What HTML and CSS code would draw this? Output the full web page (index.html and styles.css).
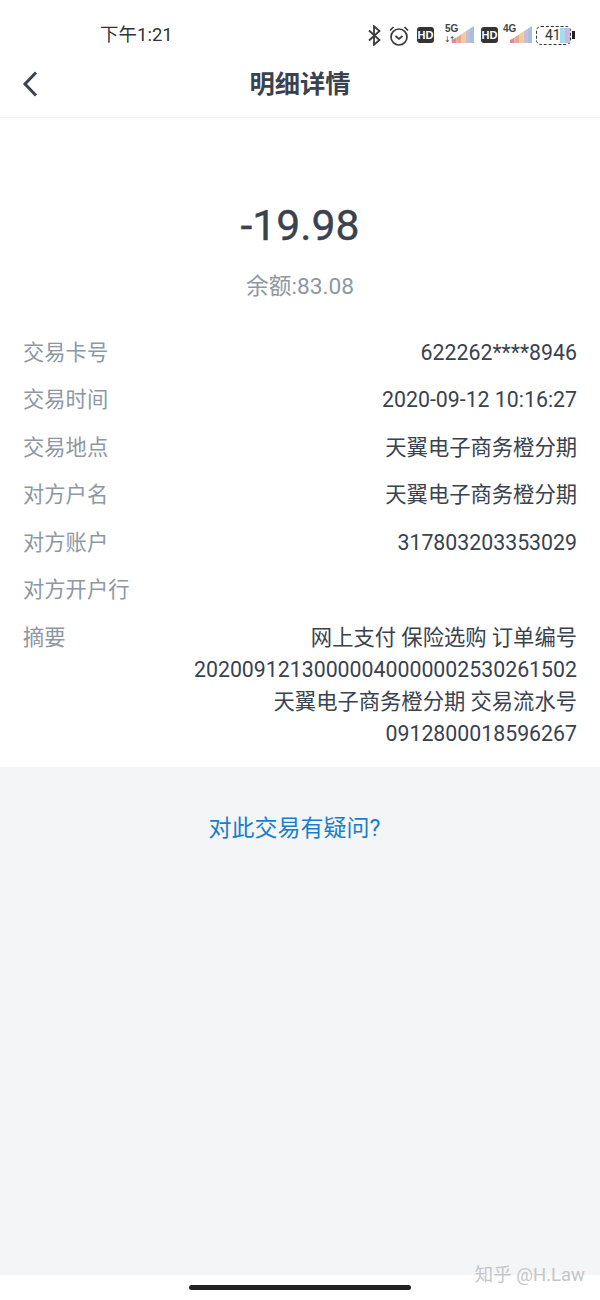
FILE: index.html
```html
<!DOCTYPE html>
<html lang="zh-CN">
<head>
    <meta charset="UTF-8">
    <meta name="viewport" content="width=device-width, initial-scale=1.0">
    <title>明细详情</title>
    <link rel="stylesheet" href="styles.css">
</head>
<body>
    <div class="phone">
        <div class="status-bar">
            <span class="clock">下午1:21</span>
            <div class="status-icons">
                <svg class="ic-bt" width="13" height="21" viewBox="0 0 13 21"><path d="M1 5.500 11.500 15 6 19.800V1.200L11.500 6 1 15.500" fill="none" stroke="#3a3a3c" stroke-width="1.800"/></svg>
                <svg class="ic-alarm" width="20" height="21" viewBox="0 0 20 21"><circle cx="10" cy="12" r="8" fill="none" stroke="#3a3a3c" stroke-width="1.700"/><path d="M6.500 11 10 14l3.500-3M1 5.500 4.500 2M19 5.500 15.500 2" fill="none" stroke="#3a3a3c" stroke-width="1.700"/></svg>
                <span class="hd hd-first">HD</span>
                <div class="signal signal-5g">
                    <span class="net">5G</span>
                    <span class="arrows">↓↑</span>
                    <svg class="bars" width="22" height="17" viewBox="0 0 22 17"><path d="M0 17v-3l4.500-2.500V17z" fill="#dc8a90"/><path d="M4.500 17V11.500L9 8.500V17z" fill="#eaa98a"/><path d="M9 17V8.500l4.500-3V17z" fill="#e9cf9c"/><path d="M13.500 17V5.500L18 2.500V17z" fill="#c9bcd9"/><path d="M18 17V2.500L22 0v17z" fill="#a9bedd"/></svg>
                </div>
                <span class="hd hd-second">HD</span>
                <div class="signal signal-4g">
                    <span class="net">4G</span>
                    <svg class="bars" width="22" height="17" viewBox="0 0 22 17"><path d="M0 17v-3l4.500-2.500V17z" fill="#dc8a90"/><path d="M4.500 17V11.500L9 8.500V17z" fill="#eaa98a"/><path d="M9 17V8.500l4.500-3V17z" fill="#e9cf9c"/><path d="M13.500 17V5.500L18 2.500V17z" fill="#c9bcd9"/><path d="M18 17V2.500L22 0v17z" fill="#a9bedd"/></svg>
                </div>
                <div class="battery">
                    <span class="battery-num">41</span>
                    <i class="cell cell-blue"></i>
                    <i class="cell cell-purple"></i>
                    <b class="battery-cap"></b>
                </div>
            </div>
        </div>

        <div class="nav-bar">
            <svg class="back" width="16" height="26" viewBox="0 0 16 26"><path d="M14 1.500 3 13l11 11.500" fill="none" stroke="#39424e" stroke-width="3"/></svg>
            <h1 class="nav-title">明细详情</h1>
        </div>

        <div class="detail">
            <div class="amount">-19.98</div>
            <div class="balance">余额:83.08</div>
            <div class="rows">
                <div class="row"><span class="label">交易卡号</span><span class="value">622262****8946</span></div>
                <div class="row"><span class="label">交易时间</span><span class="value">2020-09-12 10:16:27</span></div>
                <div class="row"><span class="label">交易地点</span><span class="value">天翼电子商务橙分期</span></div>
                <div class="row"><span class="label">对方户名</span><span class="value">天翼电子商务橙分期</span></div>
                <div class="row"><span class="label">对方账户</span><span class="value">317803203353029</span></div>
                <div class="row"><span class="label">对方开户行</span><span class="value"></span></div>
                <div class="row"><span class="label">摘要</span><span class="value">网上支付 保险选购 订单编号<br>20200912130000040000002530261502<br>天翼电子商务橙分期 交易流水号<br>0912800018596267</span></div>
            </div>
        </div>

        <div class="help">
            <span class="help-link">对此交易有疑问?</span>
        </div>

        <div class="home-area"><span class="home-bar"></span></div>
        <div class="watermark">知乎 @H.Law</div>
    </div>
</body>
</html>
```

FILE: styles.css
```css
* {
    box-sizing: border-box;
}

body {
    margin: 0;
    background: #fff;
    font-family: Roboto, "Noto Sans CJK SC", sans-serif;
    color: #39424e;
}

.phone {
    position: relative;
    width: 600px;
    height: 1300px;
    display: flex;
    flex-direction: column;
    overflow: hidden;
}

.status-bar {
    height: 58px;
    padding: 22px 29px 0 100px;
    display: flex;
    justify-content: space-between;
    align-items: flex-start;
}

.clock {
    font-size: 18.500px;
    line-height: 26px;
    color: #333;
}

.status-icons {
    display: flex;
    align-items: center;
    height: 26px;
}

.ic-alarm {
    margin-left: 8px;
}

.hd {
    width: 17px;
    height: 16px;
    background: #333;
    color: #fff;
    border-radius: 3px;
    font-family: "Liberation Sans", sans-serif;
    font-size: 11px;
    font-weight: bold;
    line-height: 16px;
    text-align: center;
}

.hd-first {
    margin-left: 8px;
}

.hd-second {
    margin-left: 7px;
}

.signal {
    position: relative;
    width: 30px;
    height: 20px;
}

.signal-5g {
    margin-left: 10px;
}

.signal-4g {
    margin-left: 4px;
}

.net {
    position: absolute;
    left: 1px;
    top: -1px;
    font-family: "Liberation Sans", sans-serif;
    font-size: 10px;
    font-weight: bold;
    line-height: 10px;
    color: #444;
}

.arrows {
    position: absolute;
    left: 0;
    top: 10px;
    font-family: "DejaVu Sans", sans-serif;
    font-size: 8px;
    line-height: 9px;
    letter-spacing: -2px;
    color: #444;
}

.bars {
    position: absolute;
    right: 0;
    top: 1px;
}

.battery {
    position: relative;
    width: 35px;
    height: 19px;
    margin-left: 4px;
    border: 1.500px dashed #333;
    border-radius: 5px;
    display: flex;
    align-items: center;
    padding-left: 8px;
}

.battery-num {
    font-size: 14px;
    line-height: 16px;
    width: 15px;
    color: #333;
}

.cell {
    width: 5px;
    height: 15px;
}

.cell-blue {
    background: #a5dcef;
}

.cell-purple {
    background: #cdb5e8;
}

.battery-cap {
    position: absolute;
    right: -5px;
    top: 4px;
    width: 3px;
    height: 8px;
    background: #222;
}

.nav-bar {
    position: relative;
    height: 60px;
    border-bottom: 1px solid #f1f2f3;
    display: flex;
    justify-content: center;
}

.back {
    position: absolute;
    left: 22px;
    top: 13px;
}

.nav-title {
    margin: 0;
    font-family: "Noto Sans CJK SC", sans-serif;
    font-size: 25.300px;
    font-weight: 700;
    line-height: 48px;
    color: #39424e;
}

.detail {
    height: 649px;
    padding: 0 23px;
    background: #fff;
}

.amount {
    margin-top: 77px;
    font-size: 42.700px;
    -webkit-text-stroke: 0.400px #39424e;
    line-height: 60px;
    text-align: center;
    color: #39424e;
}

.balance {
    margin-top: 17px;
    font-size: 22.700px;
    line-height: 30px;
    text-align: center;
    color: #8e97a3;
}

.rows {
    margin-top: 27px;
    display: flex;
    flex-direction: column;
}

.row {
    display: flex;
    justify-content: space-between;
    gap: 20px;
    padding: 7.750px 0;
    font-size: 21.300px;
    line-height: 32px;
}

.label {
    flex: none;
    color: #8e97a3;
}

.value {
    flex: 1;
    text-align: right;
    color: #39424e;
}

.help {
    flex: 1;
    background: #f3f5f7;
    padding: 44px 11px 0 0;
    text-align: center;
}

.help-link {
    font-size: 23px;
    line-height: 36px;
    color: #1a7dc8;
}

.home-area {
    height: 25px;
    background: #fff;
    display: flex;
    justify-content: center;
    padding-top: 10px;
}

.home-bar {
    width: 222px;
    height: 5px;
    border-radius: 3px;
    background: #222;
}

.watermark {
    position: absolute;
    right: 15px;
    top: 1263px;
    font-size: 18.500px;
    line-height: 24px;
    color: #c4c6c9;
}
```
